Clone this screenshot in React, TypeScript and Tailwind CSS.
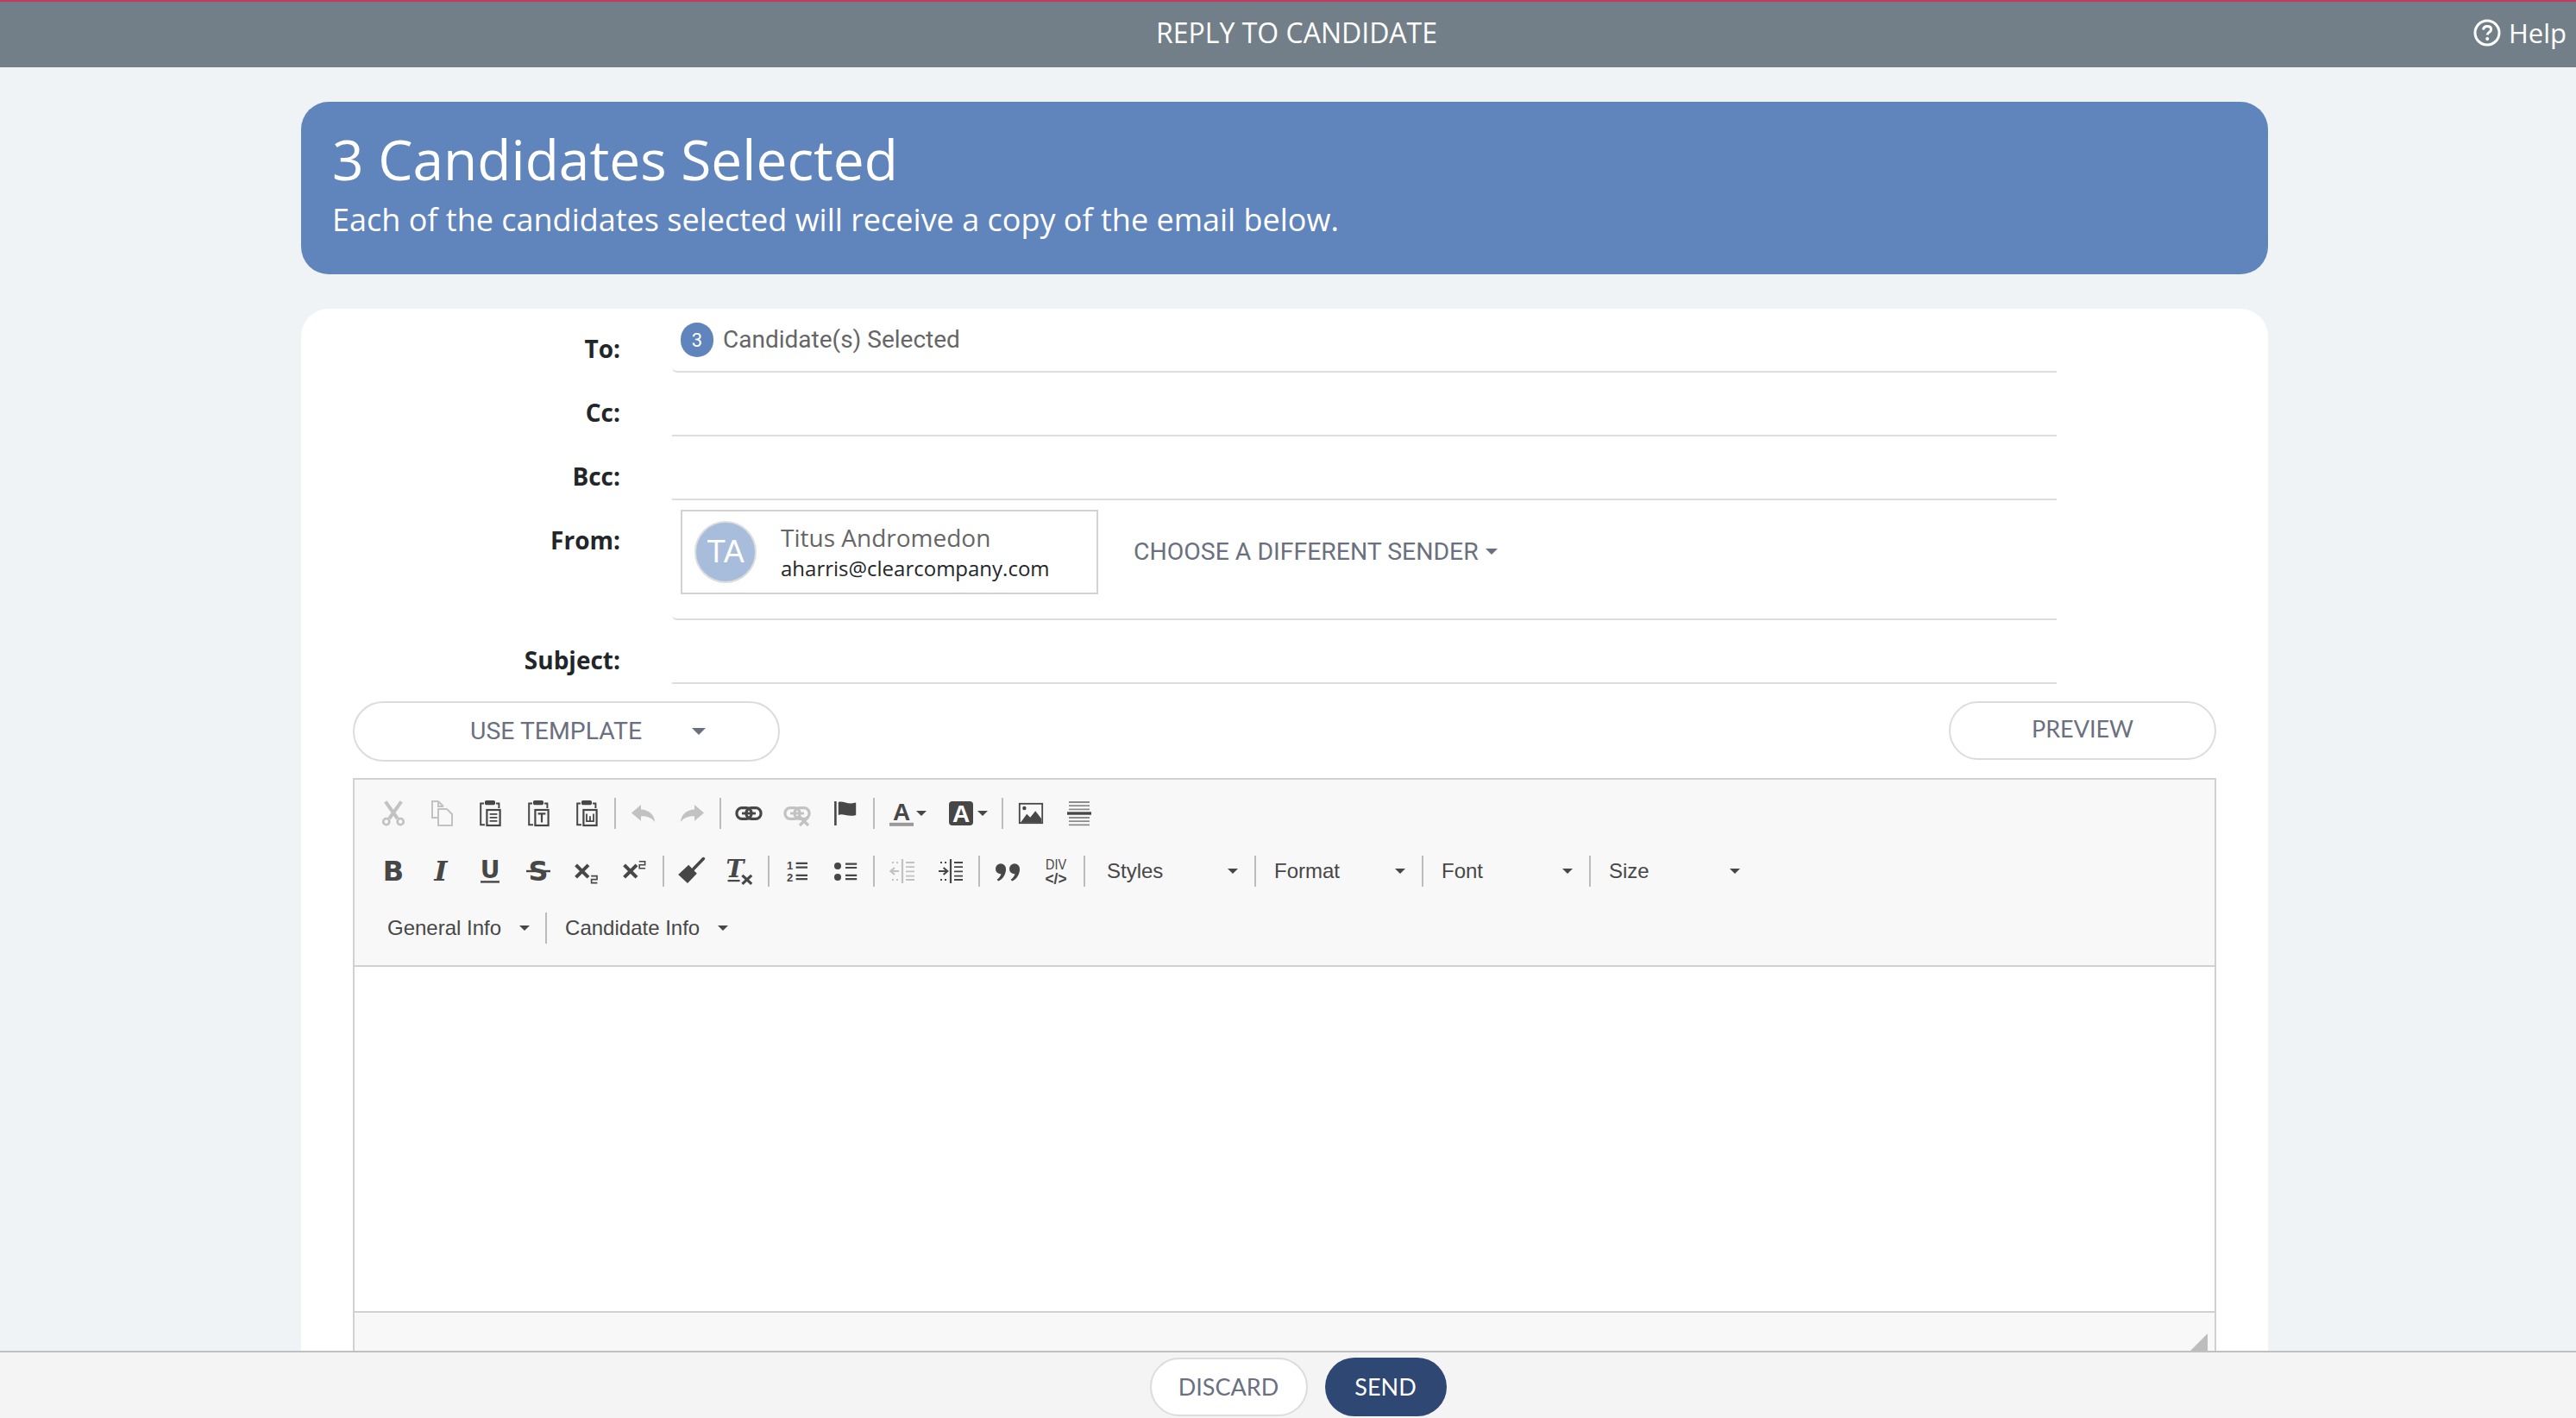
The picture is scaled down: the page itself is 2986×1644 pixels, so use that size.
import { ReactNode } from 'react';

const OPEN = "font-['Open_Sans',sans-serif]";
const ROBOTO = "font-['Roboto',sans-serif]";
const LATO = "font-['Lato',sans-serif]";
const DARK = '#474747';

function Ico({ children, off }: { children: ReactNode; off?: boolean }) {
  return (
    <svg width="32" height="32" viewBox="0 0 16 16" className={`overflow-visible ${off ? 'opacity-30' : 'opacity-100'}`}>
      {children}
    </svg>
  );
}

function Btn({ children, off }: { children: ReactNode; off?: boolean }) {
  return (
    <div className="flex h-[56px] w-[56px] shrink-0 items-center justify-center">
      <Ico off={off}>{children}</Ico>
    </div>
  );
}

function Sep() {
  return <div className="mx-[4px] h-[36px] w-[2px] shrink-0 bg-[#bcbcbc]" />;
}

function Caret({ big }: { big?: boolean }) {
  return big ? (
    <div className="h-0 w-0 border-x-[8px] border-t-[8px] border-x-transparent border-t-[#6b7080]" />
  ) : (
    <div className="h-0 w-0 shrink-0 border-x-[6px] border-t-[6px] border-x-transparent border-t-[#474747]" />
  );
}

function Combo({ label }: { label: string }) {
  return (
    <>
      <div className="flex w-[152px] shrink-0 items-center justify-between text-[24px] text-[#474747]">
        <span>{label}</span>
        <Caret />
      </div>
      <div className="ml-[19px] mr-[21px]">
        <div className="h-[36px] w-[2px] bg-[#bcbcbc]" />
      </div>
    </>
  );
}

const clipboard = (
  <>
    <rect x="5" y="0.5" width="6" height="2.6" rx="0.8" fill={DARK} />
    <path d="M4.5 2.2H2.6V14.6H5M11.5 2.2H13.2V5" fill="none" stroke={DARK} strokeWidth="1" />
    <rect x="6.2" y="6" width="7.6" height="9" fill="none" stroke={DARK} strokeWidth="1.1" />
  </>
);

const chain = (
  <>
    <rect x="1" y="4.8" width="8.5" height="6.4" rx="3" fill="none" stroke={DARK} strokeWidth="1.6" />
    <rect x="6.5" y="4.8" width="8.5" height="6.4" rx="3" fill="none" stroke={DARK} strokeWidth="1.6" />
    <path d="M4 8H12" stroke={DARK} strokeWidth="1.4" />
  </>
);

const indentLines = (
  <>
    <path d="M8 1V15" stroke={DARK} strokeWidth="1.1" />
    <path d="M10 3H15M10 5.6H15M10 8.2H15M10 10.8H15M10 13H15" stroke={DARK} strokeWidth="0.9" />
    <path d="M2 3H3M4.5 3H5.5M2 13H3M4.5 13H5.5" stroke={DARK} strokeWidth="1" />
  </>
);

function ToolRow({ children, className }: { children: ReactNode; className?: string }) {
  return <div className={`flex h-[66.5px] items-center ${className ?? ''}`}>{children}</div>;
}

function FieldRow({ label, children, h, round }: { label: string; children?: ReactNode; h: string; round?: boolean }) {
  return (
    <div className={`flex ${h}`}>
      <div className={`w-[370px] shrink-0 pt-[27px] text-right text-[28px] leading-[38px] font-bold text-[#232629] ${OPEN}`}>
        {label}
      </div>
      <div className={`ml-[60px] w-[1605px] border-b-2 border-[#dddddd] ${round ? 'rounded-bl-[6px]' : ''}`}>{children}</div>
    </div>
  );
}

export default function App() {
  return (
    <div className="flex h-[1644px] w-full flex-col overflow-hidden bg-[#eff3f6]">
      <header className={`relative flex h-[78px] shrink-0 items-center justify-center border-t-2 border-[#c8375d] bg-[#737f88] pb-[4px] pl-[20px] text-[32px] text-white ${OPEN}`}>
        REPLY TO CANDIDATE
        <div className="absolute right-[11px] top-[16px] flex items-center gap-[9px]">
          <svg width="32" height="32" viewBox="0 0 32 32" fill="none">
            <circle cx="16" cy="16" r="14" stroke="white" strokeWidth="3" />
            <path d="M11.5 12.5C11.8 9.8 13.8 8.6 16.2 8.6C18.8 8.6 20.6 10 20.6 12.2C20.6 15.4 16.2 15.4 16.2 18.6" stroke="white" strokeWidth="3" />
            <circle cx="16.2" cy="23" r="2" fill="white" />
          </svg>
          <span className="text-[31px] leading-[40px]">Help</span>
        </div>
      </header>

      <main className="min-h-0 flex-1 overflow-hidden pl-[349px] pt-[40px]">
        <div className={`flex h-[200px] w-[2280px] flex-col rounded-[32px] bg-[#6084bc] pl-[36px] pt-[22px] text-white ${OPEN}`}>
          <h1 className="text-[64px] leading-[90px]">3 Candidates Selected</h1>
          <p className="mt-[1px] text-[36px] leading-[48px]">Each of the candidates selected will receive a copy of the email below.</p>
        </div>

        <div className="mt-[40px] w-[2280px] rounded-t-[32px] bg-white">
          <FieldRow label="To:" h="h-[74px]" round>
            <div className={`flex items-center pl-[10px] pt-[16px] text-[28px] text-[#666666] ${ROBOTO}`}>
              <span className="flex h-[40px] w-[38px] items-center justify-center rounded-full bg-[#6084bc] text-[22px] text-white">3</span>
              <span className="ml-[11px] leading-[36px]">Candidate(s) Selected</span>
            </div>
          </FieldRow>
          <FieldRow label="Cc:" h="h-[74px]" />
          <FieldRow label="Bcc:" h="h-[74px]" />
          <FieldRow label="From:" h="h-[139px]" round>
            <div className="flex items-center pl-[10px] pt-[11px]">
              <div className="flex h-[98px] w-[484px] items-center border-2 border-[#d2d2d2] pl-[14px]">
                <div className="flex h-[72px] w-[72px] items-center justify-center rounded-full border-2 border-[#dddddd] bg-[#a8bcdb] text-[36px] font-light text-white">
                  <span className="font-['Liberation_Sans',sans-serif]">TA</span>
                </div>
                <div className={`ml-[28px] ${OPEN}`}>
                  <div className="text-[28px] leading-[38px] text-[#666666]">Titus Andromedon</div>
                  <div className="text-[24px] leading-[34px] text-[#232629]">aharris@clearcompany.com</div>
                </div>
              </div>
              <div className={`ml-[41px] flex items-center gap-[8px] text-[28.4px] text-[#6b7080] ${ROBOTO}`}>
                CHOOSE A DIFFERENT SENDER
                <div className="h-0 w-0 border-x-[7px] border-t-[7px] border-x-transparent border-t-[#6b7080]" />
              </div>
            </div>
          </FieldRow>
          <FieldRow label="Subject:" h="h-[74px]" />

          <div className="ml-[60px] mt-[20px] flex w-[2160px] items-start justify-between">
            <div className={`relative flex h-[70px] w-[495px] items-center rounded-full border-2 border-[#dcdcdc] pl-[134px] text-[28.4px] text-[#6b7080] ${ROBOTO}`}>
              USE TEMPLATE
              <div className="ml-[58px]"><Caret big /></div>
            </div>
            <div className={`flex h-[68px] w-[310px] items-center justify-center rounded-full border-2 border-[#dcdcdc] pb-[3px] text-[27px] text-[#6b7080] ${LATO}`}>
              PREVIEW
            </div>
          </div>

          <div className="ml-[60px] mt-[19px] w-[2160px] border-x-2 border-t-2 border-[#d1d1d1]">
            <div className="h-[215px] bg-[#f8f8f8] pl-[17px] pt-[6px] font-['Liberation_Sans',sans-serif]">
              <ToolRow>
                <Btn off>
                  <path d="M3.4 1.2L10.4 11M12.6 1.2L5.6 11" stroke={DARK} strokeWidth="2" />
                  <circle cx="3.9" cy="12.8" r="1.8" fill="none" stroke={DARK} strokeWidth="1.3" />
                  <circle cx="12.1" cy="12.8" r="1.8" fill="none" stroke={DARK} strokeWidth="1.3" />
                </Btn>
                <Btn off>
                  <path d="M6 1H2.5V10.5H5.5M6 1L9 4M6 1V4H9" fill="none" stroke={DARK} strokeWidth="1" />
                  <path d="M6 5.5H11L14 8.5V15H6Z" fill="none" stroke={DARK} strokeWidth="1" />
                </Btn>
                <Btn>
                  {clipboard}
                  <path d="M7.8 8.4H12.2M7.8 10.4H12.2M7.8 12.4H12.2" stroke={DARK} strokeWidth="0.9" />
                </Btn>
                <Btn>
                  {clipboard}
                  <path d="M7.8 8.2H12.2M10 8.2V13.2" stroke={DARK} strokeWidth="1.1" />
                </Btn>
                <Btn>
                  {clipboard}
                  <path d="M8 8.2V12.6H12V8.2M10 9.6V12.6" fill="none" stroke={DARK} strokeWidth="0.9" />
                </Btn>
                <Sep />
                <Btn off>
                  <path d="M6.5 3L1 7.8L6.5 12.4V9.6C10 9.4 12.6 10.4 14.6 13C14 8.6 11 6 6.5 5.8Z" fill={DARK} />
                </Btn>
                <Btn off>
                  <path d="M9.5 3L15 7.8L9.5 12.4V9.6C6 9.4 3.4 10.4 1.4 13C2 8.6 5 6 9.5 5.8Z" fill={DARK} />
                </Btn>
                <Sep />
                <Btn>{chain}</Btn>
                <Btn off>
                  {chain}
                  <path d="M9.5 10L14.5 15M14.5 10L9.5 15" stroke={DARK} strokeWidth="1.6" />
                </Btn>
                <Btn>
                  <path d="M2.2 1V15" stroke={DARK} strokeWidth="1.3" />
                  <path d="M3.9 1.5C6.7 0.4 9.3 3.2 14.1 1.8V9C9.3 10.4 6.7 7.8 3.9 9Z" fill={DARK} />
                </Btn>
                <Sep />
                <div className="flex h-[56px] w-[70px] shrink-0 items-center pl-[12px]">
                  <Ico>
                    <text x="7.5" y="12" textAnchor="middle" fontSize="14" fontWeight="700" fill={DARK}>A</text>
                    <rect x="0.5" y="13.4" width="14" height="2" fill="#9a9a9a" />
                  </Ico>
                  <Caret />
                </div>
                <div className="flex h-[56px] w-[69px] shrink-0 items-center pl-[11px]">
                  <Ico>
                    <rect x="0.5" y="1" width="14" height="14" rx="2" fill={DARK} />
                    <text x="7.5" y="13" textAnchor="middle" fontSize="14" fontWeight="700" fill="white">A</text>
                  </Ico>
                  <div className="ml-[2px]"><Caret /></div>
                </div>
                <Sep />
                <Btn>
                  <rect x="1.4" y="2.4" width="13.2" height="11.2" fill="none" stroke={DARK} strokeWidth="0.9" />
                  <circle cx="4.2" cy="5" r="1.1" fill={DARK} />
                  <path d="M2 13.4L5.6 8.4L7.6 10.4L10.6 6.6L14 11V13.4Z" fill={DARK} />
                </Btn>
                <Btn>
                  <path d="M2 1.5H14M2 3.6H14M2 5.7H14M2 10.5H14M2 12.6H14M2 14.7H14" stroke="#8c8c8c" strokeWidth="0.9" />
                  <path d="M1 8H15" stroke={DARK} strokeWidth="1.7" />
                </Btn>
              </ToolRow>

              <ToolRow>
                <Btn>
                  <text x="8" y="13.5" textAnchor="middle" fontSize="16" fontWeight="700" fill={DARK} fontFamily="'DejaVu Sans',sans-serif">B</text>
                </Btn>
                <Btn>
                  <text x="7.5" y="13.5" textAnchor="middle" fontSize="16" fontWeight="700" fontStyle="italic" fill={DARK} fontFamily="'DejaVu Serif',serif">I</text>
                </Btn>
                <Btn>
                  <text x="8" y="12" textAnchor="middle" fontSize="14" fontWeight="700" fill={DARK} fontFamily="'DejaVu Sans',sans-serif">U</text>
                  <rect x="2.5" y="13.6" width="11" height="1.2" fill={DARK} />
                </Btn>
                <Btn>
                  <text x="8" y="13.6" textAnchor="middle" fontSize="16" fontWeight="700" fill={DARK} fontFamily="'DejaVu Sans',sans-serif">S</text>
                  <rect x="1" y="7.4" width="14" height="1.2" fill={DARK} />
                </Btn>
                <Btn>
                  <path d="M1.8 4.4L9 11.6M9 4.4L1.8 11.6" stroke={DARK} strokeWidth="2" />
                  <path d="M10.6 10.8H14V12.8H10.8V14.8H14.2" fill="none" stroke={DARK} strokeWidth="0.8" />
                </Btn>
                <Btn>
                  <path d="M1.8 4.4L9 11.6M9 4.4L1.8 11.6" stroke={DARK} strokeWidth="2" />
                  <path d="M10.4 2.4H13.8V4.4H10.6V6.4H14" fill="none" stroke={DARK} strokeWidth="0.8" />
                </Btn>
                <Sep />
                <Btn>
                  <path d="M14.7 0.8L8.9 6.8" stroke={DARK} strokeWidth="1.8" strokeLinecap="round" />
                  <path d="M6.1 4.4L10.9 9.4L5.5 15L0.1 10Z" fill={DARK} />
                </Btn>
                <Btn>
                  <text x="5" y="11.6" textAnchor="middle" fontSize="14" fontWeight="700" fontStyle="italic" fill={DARK} fontFamily="'DejaVu Serif',serif">T</text>
                  <rect x="0.8" y="13" width="7" height="1.1" fill={DARK} />
                  <path d="M9.2 10.4L14.6 15.4M14.6 10.4L9.2 15.4" stroke={DARK} strokeWidth="1.6" />
                </Btn>
                <Sep />
                <Btn>
                  <text x="3.8" y="7" textAnchor="middle" fontSize="6.5" fontWeight="700" fill={DARK}>1</text>
                  <text x="3.8" y="14" textAnchor="middle" fontSize="6.5" fontWeight="700" fill={DARK}>2</text>
                  <path d="M7.3 3.4H14M7.3 5.8H14M7.3 10.4H14M7.3 12.6H14" stroke={DARK} strokeWidth="1.1" />
                </Btn>
                <Btn>
                  <circle cx="3.5" cy="5" r="2" fill={DARK} />
                  <circle cx="3.5" cy="11.5" r="2" fill={DARK} />
                  <path d="M8 3.8H14.6M8 6H14.6M8 10.4H14.6M8 12.6H14.6" stroke={DARK} strokeWidth="1.1" />
                </Btn>
                <Sep />
                <Btn off>
                  <path d="M6 8H1.5M3.5 6L1.2 8L3.5 10" fill="none" stroke={DARK} strokeWidth="1.1" />
                  {indentLines}
                </Btn>
                <Btn>
                  <path d="M1 8H5.8M3.8 6L6.1 8L3.8 10" fill="none" stroke={DARK} strokeWidth="1.1" />
                  {indentLines}
                </Btn>
                <Sep />
                <Btn>
                  <circle cx="4" cy="6.6" r="3" fill={DARK} />
                  <path d="M7 6.6C7 10 5.4 12.4 2.6 13.8L1.8 12.9C3.8 11.4 4.4 10 4.2 8.6Z" fill={DARK} />
                  <circle cx="12" cy="6.6" r="3" fill={DARK} />
                  <path d="M15 6.6C15 10 13.4 12.4 10.6 13.8L9.8 12.9C11.8 11.4 12.4 10 12.2 8.6Z" fill={DARK} />
                </Btn>
                <Btn>
                  <text x="8" y="7" textAnchor="middle" fontSize="8.4" textLength="12" lengthAdjust="spacingAndGlyphs" fill={DARK}>DIV</text>
                  <text x="8" y="15.4" textAnchor="middle" fontSize="9.5" fontWeight="700" textLength="12.5" lengthAdjust="spacingAndGlyphs" fill={DARK}>{'</>'}</text>
                </Btn>
                <Sep />
                <div className="ml-[21px] flex items-center">
                  <Combo label="Styles" />
                  <Combo label="Format" />
                  <Combo label="Font" />
                  <div className="flex w-[152px] shrink-0 items-center justify-between text-[24px] text-[#474747]">
                    <span>Size</span>
                    <Caret />
                  </div>
                </div>
              </ToolRow>

              <ToolRow className="pl-[21px] text-[24px] text-[#474747]">
                <span>General Info</span>
                <div className="ml-[21px]"><Caret /></div>
                <div className="ml-[18px] mr-[21px] h-[36px] w-[2px] bg-[#bcbcbc]" />
                <span>Candidate Info</span>
                <div className="ml-[21px]"><Caret /></div>
              </ToolRow>
            </div>

            <div className="h-[403px] border-y-2 border-[#d1d1d1] bg-white" />

            <div className="relative h-[60px] bg-[#f8f8f8]">
              <div className="absolute right-[8px] top-[24px] h-0 w-0 border-b-[20px] border-l-[20px] border-b-[#bdbdbd] border-l-transparent" />
            </div>
          </div>
        </div>
      </main>

      <footer className={`flex h-[78px] shrink-0 justify-center gap-[20px] border-t-2 border-[#c0c0c0] bg-[#f4f4f4] pt-[6px] pl-[23px] text-[27px] ${LATO}`}>
        <div className="flex h-[68px] w-[183px] items-center justify-center rounded-full border-2 border-[#dcdcdc] bg-white text-[#6b7080]">DISCARD</div>
        <div className="flex h-[68px] w-[141px] items-center justify-center rounded-full bg-[#2e4773] text-white">SEND</div>
      </footer>
    </div>
  );
}
